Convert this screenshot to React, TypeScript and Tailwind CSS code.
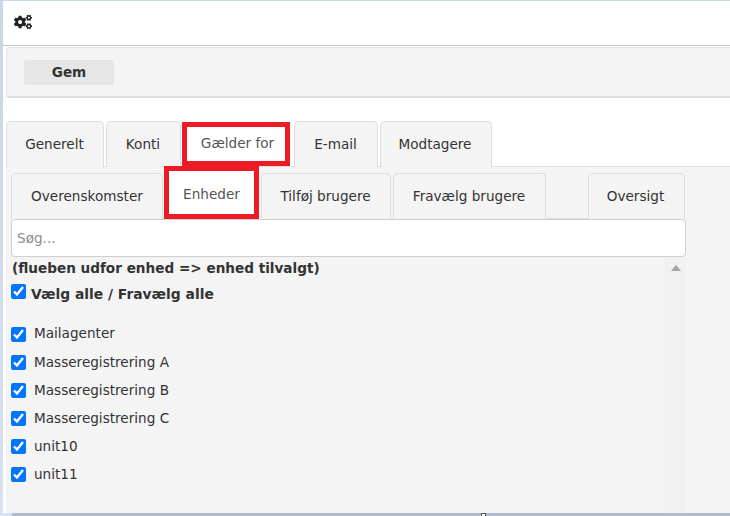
import React from 'react';
import { FaCogs } from 'react-icons/fa';

const tabClass = 'flex items-center justify-center bg-[#f4f4f4] border border-b-0 border-[#dedede] rounded-t-[5px] text-[#333]';

const units = ['Mailagenter', 'Masseregistrering A', 'Masseregistrering B', 'Masseregistrering C', 'unit10', 'unit11'];

const App: React.FC = () => {
  return (
    <div className="w-[730px] h-[516px] overflow-hidden bg-linear-to-b from-[#c9d5e8] to-[#d8e2f0] pl-[3px] pt-px flex flex-col font-['DejaVu_Sans',sans-serif] text-[13.6px] text-[#333]">
      <div className="flex-1 min-h-0 bg-white flex flex-col">
        {/* header */}
        <div className="h-[45px] shrink-0 border-b border-[#c4c4c4] flex items-center pl-[11px] bg-white">
          <FaCogs className="text-[#222] text-[18px] -mt-[3px]" />
        </div>

        {/* toolbar */}
        <div className="h-[51px] shrink-0 mt-px ml-[3px] bg-[#f4f4f4] border border-r-0 border-[#e4e4e4] border-b-2 border-b-[#dcdcdc] rounded-l-[4px] flex items-center pl-[17px]">
          <button className="w-[90px] h-[25px] bg-[#e6e6e6] rounded-[3px] font-bold text-[#333]">Gem</button>
        </div>

        {/* main tabs */}
        <div className="mt-[23px] ml-[3px] h-[46px] shrink-0 flex border-b border-[#dedede]">
          <div className={`${tabClass} h-[46px] w-[98px] pr-px`}>Generelt</div>
          <div className={`${tabClass} h-[46px] w-[75px] ml-[2px] pr-px`}>Konti</div>
          <div className="w-[108px] h-[44px] mt-px ml-px border-[5px] border-[#ed1c24] bg-white flex items-center justify-center text-[#555] pb-[2px] pl-[3px]">Gælder for</div>
          <div className={`${tabClass} h-[46px] w-[84px] ml-[4px] pr-px`}>E-mail</div>
          <div className={`${tabClass} h-[46px] w-[112px] ml-[2px] pr-[2px]`}>Modtagere</div>
        </div>

        {/* panel */}
        <div className="flex-1 min-h-0 ml-[3px] bg-[#f4f4f4] flex flex-col">
          <div className="mt-[6px] ml-[5px] h-[46px] shrink-0 flex relative">
            <div className={`${tabClass} h-[46px] w-[152px]`}>Overenskomster</div>
            <div className="absolute left-[153px] -top-[7px] w-[95px] h-[53px] border-[5px] border-[#ed1c24] bg-white flex items-center justify-center text-[#555] pt-[4px]">Enheder</div>
            <div className={`${tabClass} h-[46px] w-[130px] ml-[98px] pr-px`}>Tilføj brugere</div>
            <div className={`${tabClass} h-[46px] w-[153px] ml-[2px] pr-px`}>Fravælg brugere</div>
            <div className="w-[42px] h-px mt-[45px] bg-[#dedede]" />
            <div className={`${tabClass} h-[46px] w-[97px] pr-[2px]`}>Oversigt</div>
          </div>

          <input
            placeholder="Søg..."
            className="ml-[5px] w-[675px] h-[38px] shrink-0 bg-white border border-[#cfcfcf] rounded-[4px] px-[5px] text-[13.6px] placeholder:text-[#8d8d8d] outline-none"
          />

          <div className="ml-[5px] w-[675px] flex-1 min-h-0 flex">
            <div className="flex-1 min-w-0 pt-[2px]">
              <div className="font-bold leading-[18px] h-[18px] ml-px whitespace-nowrap">(flueben udfor enhed =&gt; enhed tilvalgt)</div>
              <label className="flex items-center h-[15px] mt-[8px] font-bold text-[13.85px]">
                <input type="checkbox" defaultChecked className="w-[15px] h-[15px] m-0 -mt-[3px]" />
                <span className="ml-[5px] mt-[4px]">Vælg alle / Fravælg alle</span>
              </label>
              <div className="mt-[20px] flex flex-col">
                {units.map((u, i) => (
                  <label key={u} className="flex items-center h-[28px]">
                    <input type="checkbox" defaultChecked className="w-[15px] h-[15px] m-0" />
                    <span className={i === 0 ? 'ml-[8px] -mt-[2px]' : 'ml-[8px]'}>{u}</span>
                  </label>
                ))}
              </div>
            </div>
            {/* scrollbar */}
            <div className="w-[21px] shrink-0 bg-[#f1f1f1] flex justify-center pt-[8px]">
              <svg width="10" height="6" viewBox="0 0 10 6"><path d="M5 0 L10 6 L0 6 Z" fill="#a3a3a3" /></svg>
            </div>
          </div>
        </div>
      </div>

      {/* bottom strip */}
      <div className="h-[3px] shrink-0 -ml-[3px] bg-[#b0bccd] flex relative">
        <div className="w-[12px] h-[3px] bg-[#d8e2f0]" />
        <div className="absolute left-[481px] top-0 w-[5px] h-[3px] bg-white border border-b-0 border-[#555]" />
      </div>
    </div>
  );
};

export default App;
